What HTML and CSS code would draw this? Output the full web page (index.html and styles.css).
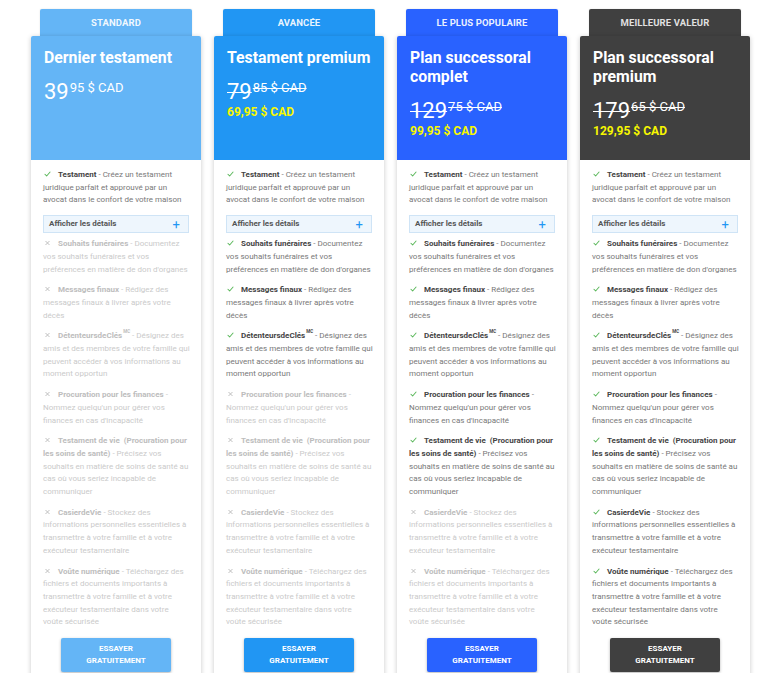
FILE: index.html
```html
<!DOCTYPE html>
<html lang="fr">
<head>
<meta charset="utf-8">
<title>Forfaits</title>
<link rel="stylesheet" href="styles.css">
</head>
<body>
<div class="plans">

  <!-- STANDARD -->
  <div class="plan standard">
    <div class="tab">STANDARD</div>
    <div class="card">
      <div class="head">
        <h2 class="title">Dernier testament</h2>
        <div class="price"><span class="int">39</span><span class="cents">95 $ CAD</span></div>
      </div>
      <ul class="features">
        <li class="on"><svg class="ico" viewBox="0 0 8 7"><polyline points="1,3.8 3,5.8 7,1.2"/></svg><b>Testament</b> - Créez un testament juridique parfait et approuvé par un avocat dans le confort de votre maison</li>
        <li class="details"><span>Afficher les détails</span><span class="plus">+</span></li>
        <li class="off"><svg class="ico" viewBox="0 0 8 7"><path d="M2 1.5l4 4M6 1.5l-4 4"/></svg><b>Souhaits funéraires</b> - Documentez vos souhaits funéraires et vos préférences en matière de don d'organes</li>
        <li class="off"><svg class="ico" viewBox="0 0 8 7"><path d="M2 1.5l4 4M6 1.5l-4 4"/></svg><b>Messages finaux</b> - Rédigez des messages finaux à livrer après votre décès</li>
        <li class="off"><svg class="ico" viewBox="0 0 8 7"><path d="M2 1.5l4 4M6 1.5l-4 4"/></svg><b>DétenteursdeClés<sup class="mark">MC</sup></b> - Désignez des amis et des membres de votre famille qui peuvent accéder à vos informations au moment opportun</li>
        <li class="off"><svg class="ico" viewBox="0 0 8 7"><path d="M2 1.5l4 4M6 1.5l-4 4"/></svg><b>Procuration pour les finances</b> - Nommez quelqu'un pour gérer vos finances en cas d'incapacité</li>
        <li class="off"><svg class="ico" viewBox="0 0 8 7"><path d="M2 1.5l4 4M6 1.5l-4 4"/></svg><b>Testament de vie &nbsp;(Procuration pour les soins de santé)</b> - Précisez vos souhaits en matière de soins de santé au cas où vous seriez incapable de communiquer</li>
        <li class="off"><svg class="ico" viewBox="0 0 8 7"><path d="M2 1.5l4 4M6 1.5l-4 4"/></svg><b>CasierdeVie</b> - Stockez des informations personnelles essentielles à transmettre à votre famille et à votre exécuteur testamentaire</li>
        <li class="off"><svg class="ico" viewBox="0 0 8 7"><path d="M2 1.5l4 4M6 1.5l-4 4"/></svg><b>Voûte numérique</b> - Téléchargez des fichiers et documents importants à transmettre à votre famille et à votre exécuteur testamentaire dans votre voûte&nbsp;sécurisée</li>
      </ul>
      <div class="cta"><a class="btn" href="#">ESSAYER<br>GRATUITEMENT</a></div>
    </div>
  </div>

  <!-- AVANCÉE -->
  <div class="plan advanced">
    <div class="tab">AVANCÉE</div>
    <div class="card">
      <div class="head">
        <h2 class="title">Testament premium</h2>
        <div class="price old"><span class="int">79</span><span class="cents">85 $ CAD</span></div>
        <div class="sale">69,95 $ CAD</div>
      </div>
      <ul class="features">
        <li class="on"><svg class="ico" viewBox="0 0 8 7"><polyline points="1,3.8 3,5.8 7,1.2"/></svg><b>Testament</b> - Créez un testament juridique parfait et approuvé par un avocat dans le confort de votre maison</li>
        <li class="details"><span>Afficher les détails</span><span class="plus">+</span></li>
        <li class="on"><svg class="ico" viewBox="0 0 8 7"><polyline points="1,3.8 3,5.8 7,1.2"/></svg><b>Souhaits funéraires</b> - Documentez vos souhaits funéraires et vos préférences en matière de don d'organes</li>
        <li class="on"><svg class="ico" viewBox="0 0 8 7"><polyline points="1,3.8 3,5.8 7,1.2"/></svg><b>Messages finaux</b> - Rédigez des messages finaux à livrer après votre décès</li>
        <li class="on"><svg class="ico" viewBox="0 0 8 7"><polyline points="1,3.8 3,5.8 7,1.2"/></svg><b>DétenteursdeClés<sup class="mark">MC</sup></b> - Désignez des amis et des membres de votre famille qui peuvent accéder à vos informations au moment opportun</li>
        <li class="off"><svg class="ico" viewBox="0 0 8 7"><path d="M2 1.5l4 4M6 1.5l-4 4"/></svg><b>Procuration pour les finances</b> - Nommez quelqu'un pour gérer vos finances en cas d'incapacité</li>
        <li class="off"><svg class="ico" viewBox="0 0 8 7"><path d="M2 1.5l4 4M6 1.5l-4 4"/></svg><b>Testament de vie &nbsp;(Procuration pour les soins de santé)</b> - Précisez vos souhaits en matière de soins de santé au cas où vous seriez incapable de communiquer</li>
        <li class="off"><svg class="ico" viewBox="0 0 8 7"><path d="M2 1.5l4 4M6 1.5l-4 4"/></svg><b>CasierdeVie</b> - Stockez des informations personnelles essentielles à transmettre à votre famille et à votre exécuteur testamentaire</li>
        <li class="off"><svg class="ico" viewBox="0 0 8 7"><path d="M2 1.5l4 4M6 1.5l-4 4"/></svg><b>Voûte numérique</b> - Téléchargez des fichiers et documents importants à transmettre à votre famille et à votre exécuteur testamentaire dans votre voûte&nbsp;sécurisée</li>
      </ul>
      <div class="cta"><a class="btn" href="#">ESSAYER<br>GRATUITEMENT</a></div>
    </div>
  </div>

  <!-- LE PLUS POPULAIRE -->
  <div class="plan popular">
    <div class="tab">LE PLUS POPULAIRE</div>
    <div class="card">
      <div class="head">
        <h2 class="title">Plan successoral complet</h2>
        <div class="price old"><span class="int">129</span><span class="cents">75 $ CAD</span></div>
        <div class="sale">99,95 $ CAD</div>
      </div>
      <ul class="features">
        <li class="on"><svg class="ico" viewBox="0 0 8 7"><polyline points="1,3.8 3,5.8 7,1.2"/></svg><b>Testament</b> - Créez un testament juridique parfait et approuvé par un avocat dans le confort de votre maison</li>
        <li class="details"><span>Afficher les détails</span><span class="plus">+</span></li>
        <li class="on"><svg class="ico" viewBox="0 0 8 7"><polyline points="1,3.8 3,5.8 7,1.2"/></svg><b>Souhaits funéraires</b> - Documentez vos souhaits funéraires et vos préférences en matière de don d'organes</li>
        <li class="on"><svg class="ico" viewBox="0 0 8 7"><polyline points="1,3.8 3,5.8 7,1.2"/></svg><b>Messages finaux</b> - Rédigez des messages finaux à livrer après votre décès</li>
        <li class="on"><svg class="ico" viewBox="0 0 8 7"><polyline points="1,3.8 3,5.8 7,1.2"/></svg><b>DétenteursdeClés<sup class="mark">MC</sup></b> - Désignez des amis et des membres de votre famille qui peuvent accéder à vos informations au moment opportun</li>
        <li class="on"><svg class="ico" viewBox="0 0 8 7"><polyline points="1,3.8 3,5.8 7,1.2"/></svg><b>Procuration pour les finances</b> - Nommez quelqu'un pour gérer vos finances en cas d'incapacité</li>
        <li class="on"><svg class="ico" viewBox="0 0 8 7"><polyline points="1,3.8 3,5.8 7,1.2"/></svg><b>Testament de vie &nbsp;(Procuration pour les soins de santé)</b> - Précisez vos souhaits en matière de soins de santé au cas où vous seriez incapable de communiquer</li>
        <li class="off"><svg class="ico" viewBox="0 0 8 7"><path d="M2 1.5l4 4M6 1.5l-4 4"/></svg><b>CasierdeVie</b> - Stockez des informations personnelles essentielles à transmettre à votre famille et à votre exécuteur testamentaire</li>
        <li class="off"><svg class="ico" viewBox="0 0 8 7"><path d="M2 1.5l4 4M6 1.5l-4 4"/></svg><b>Voûte numérique</b> - Téléchargez des fichiers et documents importants à transmettre à votre famille et à votre exécuteur testamentaire dans votre voûte&nbsp;sécurisée</li>
      </ul>
      <div class="cta"><a class="btn" href="#">ESSAYER<br>GRATUITEMENT</a></div>
    </div>
  </div>

  <!-- MEILLEURE VALEUR -->
  <div class="plan best">
    <div class="tab">MEILLEURE VALEUR</div>
    <div class="card">
      <div class="head">
        <h2 class="title">Plan successoral premium</h2>
        <div class="price old"><span class="int">179</span><span class="cents">65 $ CAD</span></div>
        <div class="sale">129,95 $ CAD</div>
      </div>
      <ul class="features">
        <li class="on"><svg class="ico" viewBox="0 0 8 7"><polyline points="1,3.8 3,5.8 7,1.2"/></svg><b>Testament</b> - Créez un testament juridique parfait et approuvé par un avocat dans le confort de votre maison</li>
        <li class="details"><span>Afficher les détails</span><span class="plus">+</span></li>
        <li class="on"><svg class="ico" viewBox="0 0 8 7"><polyline points="1,3.8 3,5.8 7,1.2"/></svg><b>Souhaits funéraires</b> - Documentez vos souhaits funéraires et vos préférences en matière de don d'organes</li>
        <li class="on"><svg class="ico" viewBox="0 0 8 7"><polyline points="1,3.8 3,5.8 7,1.2"/></svg><b>Messages finaux</b> - Rédigez des messages finaux à livrer après votre décès</li>
        <li class="on"><svg class="ico" viewBox="0 0 8 7"><polyline points="1,3.8 3,5.8 7,1.2"/></svg><b>DétenteursdeClés<sup class="mark">MC</sup></b> - Désignez des amis et des membres de votre famille qui peuvent accéder à vos informations au moment opportun</li>
        <li class="on"><svg class="ico" viewBox="0 0 8 7"><polyline points="1,3.8 3,5.8 7,1.2"/></svg><b>Procuration pour les finances</b> - Nommez quelqu'un pour gérer vos finances en cas d'incapacité</li>
        <li class="on"><svg class="ico" viewBox="0 0 8 7"><polyline points="1,3.8 3,5.8 7,1.2"/></svg><b>Testament de vie &nbsp;(Procuration pour les soins de santé)</b> - Précisez vos souhaits en matière de soins de santé au cas où vous seriez incapable de communiquer</li>
        <li class="on"><svg class="ico" viewBox="0 0 8 7"><polyline points="1,3.8 3,5.8 7,1.2"/></svg><b>CasierdeVie</b> - Stockez des informations personnelles essentielles à transmettre à votre famille et à votre exécuteur testamentaire</li>
        <li class="on"><svg class="ico" viewBox="0 0 8 7"><polyline points="1,3.8 3,5.8 7,1.2"/></svg><b>Voûte numérique</b> - Téléchargez des fichiers et documents importants à transmettre à votre famille et à votre exécuteur testamentaire dans votre voûte&nbsp;sécurisée</li>
      </ul>
      <div class="cta"><a class="btn" href="#">ESSAYER<br>GRATUITEMENT</a></div>
    </div>
  </div>

</div>
</body>
</html>
```

FILE: styles.css
```css
* {
  box-sizing: border-box;
  margin: 0;
  padding: 0;
}

body {
  font-family: Roboto, "Liberation Sans", Arial, sans-serif;
  background: #ffffff;
  overflow: hidden;
}

.plans {
  display: flex;
  gap: 13px;
  padding: 9px 0 0 31px;
  align-items: flex-start;
}

.plan {
  width: 170px;
  display: flex;
  flex-direction: column;
}

.tab {
  margin: 0 9px;
  height: 27px;
  line-height: 28px;
  text-align: center;
  font-size: 9.5px;
  font-weight: 700;
  letter-spacing: 0.1px;
  color: rgba(255, 255, 255, 0.92);
  border-radius: 2px 2px 0 0;
  box-shadow: 0 0 2px rgba(0, 0, 0, 0.12);
}

.card {
  background: #ffffff;
  border-radius: 2px;
  box-shadow: 0 1px 5px rgba(0, 0, 0, 0.22);
  position: relative;
}

.head {
  height: 124px;
  padding: 12px 6px 0 13px;
  color: #ffffff;
  border-radius: 2px 2px 0 0;
}

.title {
  font-size: 15.8px;
  line-height: 19px;
  font-weight: 700;
}

.price {
  margin-top: 12px;
  font-size: 22px;
  line-height: 26px;
  white-space: nowrap;
}

.price .cents {
  font-size: 13px;
  line-height: 18px;
  vertical-align: top;
  margin-left: 1px;
}

.price.old .int,
.price.old .cents {
  text-decoration: line-through;
  text-decoration-thickness: 1px;
}

.sale {
  margin-top: 0;
  font-size: 12px;
  line-height: 14px;
  font-weight: 700;
  color: #f7f700;
}

.standard .tab,
.standard .head,
.standard .btn {
  background: #64b5f6;
}

.advanced .tab,
.advanced .head,
.advanced .btn {
  background: #2196f3;
}

.popular .tab,
.popular .head,
.popular .btn {
  background: #2962ff;
}

.best .tab,
.best .head,
.best .btn {
  background: #404040;
}

.best .tab {
  color: rgba(255, 255, 255, 0.85);
}

.features {
  list-style: none;
  padding: 9px 10px 0 12px;
  font-size: 8px;
  line-height: 12.7px;
  color: #787878;
}

.features li {
  margin-bottom: 8px;
}

.features li:last-child {
  margin-bottom: 0;
}

.features b {
  font-weight: 700;
}

.ico {
  display: inline-block;
  width: 7px;
  height: 6px;
  margin: 0 7px 0 1px;
  vertical-align: 0;
  fill: none;
  stroke-width: 1.2;
  stroke-linecap: round;
  stroke-linejoin: round;
}

.on .ico {
  stroke: #5cb85c;
}

.on b {
  color: #444444;
}

.off {
  color: #cacaca;
}

.off b {
  color: #bdbdbd;
}

.off .ico {
  stroke: #b5b5b5;
  stroke-width: 1;
}

.mark {
  font-size: 4.5px;
  line-height: 0;
  vertical-align: 5px;
  margin-left: 1px;
  font-weight: 700;
}

.features li.details {
  display: flex;
  justify-content: space-between;
  align-items: center;
  height: 18px;
  margin: 0 2px 5px 0;
  padding: 0 8px 0 5px;
  background: #eef6fd;
  border: 1px solid #cfe4f6;
  font-weight: 700;
  color: #555555;
}

.features li:first-child {
  margin-bottom: 8px;
}

.plus {
  color: #2196f3;
  font-size: 13px;
  font-weight: 400;
  line-height: 1;
}

.cta {
  padding: 9px 0 12px;
  text-align: center;
}

.btn {
  display: inline-block;
  width: 110px;
  padding: 5px 0 6px;
  font-size: 8px;
  line-height: 11.5px;
  font-weight: 700;
  color: #ffffff;
  text-decoration: none;
  border-radius: 2px;
  box-shadow: 0 1px 3px rgba(0, 0, 0, 0.3);
}
```
